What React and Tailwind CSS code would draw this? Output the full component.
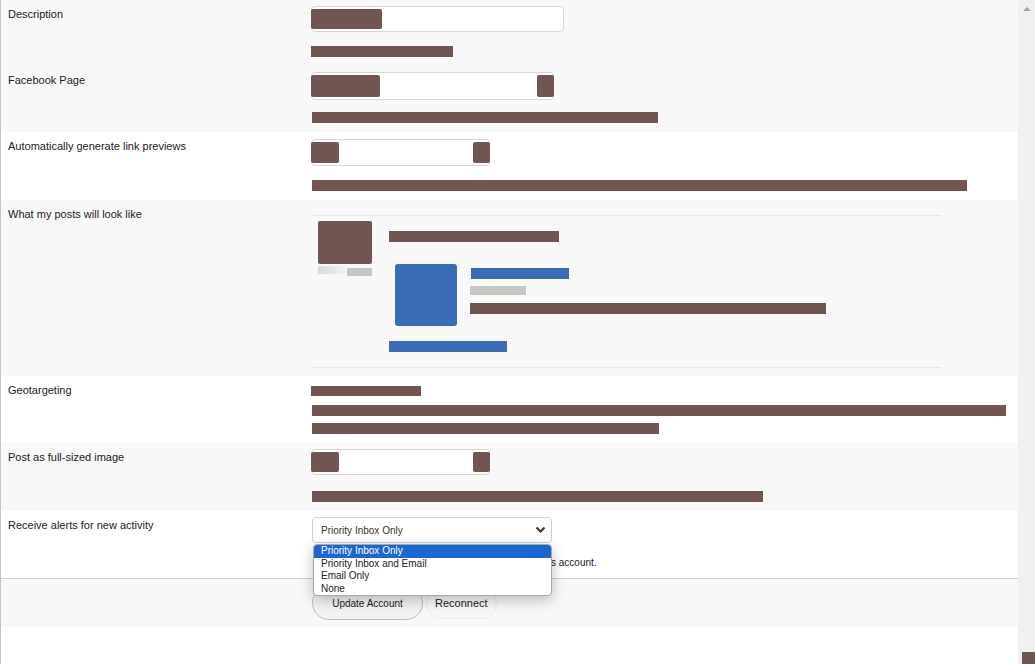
import React from "react";

const B = "bg-[#715553]";

function Label({ children }) {
  return (
    <div className="w-[310px] shrink-0 pl-[7px] pt-[7px] text-[11px] leading-[14px] text-[#222]">
      {children}
    </div>
  );
}

function Input({ w, h, left, right }) {
  return (
    <div
      className={`relative rounded-[4px] border border-[#d6d6d6] bg-white ${w} ${h}`}
    >
      <div className={`absolute left-[-1px] top-[2px] bottom-[2px] rounded-[2px] ${B} ${left}`} />
      {right && (
        <div className={`absolute right-[-1px] top-[2px] bottom-[2px] rounded-[2px] ${B} ${right}`} />
      )}
    </div>
  );
}

export default function App() {
  return (
    <div
      className="flex h-[664px] w-[1035px] overflow-hidden bg-white"
      style={{ fontFamily: '"Liberation Sans", Arial, sans-serif' }}
    >
      <div className="flex flex-1 flex-col border-l border-[#c4c4c4]">
        {/* Description */}
        <div className="flex h-[66px] bg-[#f8f8f8]">
          <Label>Description</Label>
          <div className="flex flex-col pt-[6px]">
            <Input w="w-[253px]" h="h-[26px]" left="w-[71px]" />
            <div className={`mt-[14px] h-[11px] w-[142px] ${B}`} />
          </div>
        </div>
        {/* Facebook Page */}
        <div className="flex h-[66px] bg-[#f8f8f8]">
          <Label>Facebook Page</Label>
          <div className="flex flex-col pt-[6px]">
            <Input w="w-[243px]" h="h-[28px]" left="w-[69px]" right="w-[17px]" />
            <div className={`ml-px mt-[12px] h-[11px] w-[346px] ${B}`} />
          </div>
        </div>
        {/* Auto link previews */}
        <div className="flex h-[68px] bg-white">
          <Label>Automatically generate link previews</Label>
          <div className="flex flex-col pt-[7px]">
            <Input w="w-[179px]" h="h-[27px]" left="w-[28px]" right="w-[17px]" />
            <div className={`ml-px mt-[14px] h-[11px] w-[655px] ${B}`} />
          </div>
        </div>
        {/* Preview */}
        <div className="flex h-[176px] bg-[#f8f8f8]">
          <Label>What my posts will look like</Label>
          <div className="pt-[15px]">
            <div className="flex w-[630px] border-y border-[#e8e8e8] pb-[15px]">
              <div className="w-[78px] shrink-0 pl-[7px] pt-[5px]">
                <div className={`h-[43px] w-[54px] rounded-[2px] ${B}`} />
                <div className="mt-[2px] flex h-[8px] w-[54px]">
                  <div className="h-full w-[29px] bg-gradient-to-r from-[#d8d8d8] to-[#f4f4f4]" />
                  <div className="mt-[2px] h-[8px] w-[25px] bg-[#c6c6c2]" />
                </div>
              </div>
              <div className="flex flex-col pt-[15px]">
                <div className={`h-[11px] w-[170px] ${B}`} />
                <div className="ml-[6px] mt-[22px] flex">
                  <div className="h-[62px] w-[62px] rounded-[3px] bg-[#3a6bb7]" />
                  <div className="ml-[13px] flex flex-col pt-[4px]">
                    <div className="ml-px h-[11px] w-[98px] bg-[#3a6bb7]" />
                    <div className="mt-[7px] h-[9px] w-[56px] bg-[#c6c6c2]" />
                    <div className={`mt-[8px] h-[11px] w-[356px] ${B}`} />
                  </div>
                </div>
                <div className="mt-[15px] h-[11px] w-[118px] bg-[#3a6bb7]" />
              </div>
            </div>
          </div>
        </div>
        {/* Geotargeting */}
        <div className="flex h-[67px] bg-white">
          <Label>Geotargeting</Label>
          <div className="flex flex-col pt-[10px]">
            <div className={`h-[10px] w-[110px] ${B}`} />
            <div className={`ml-px mt-[9px] h-[11px] w-[694px] ${B}`} />
            <div className={`ml-px mt-[7px] h-[11px] w-[347px] ${B}`} />
          </div>
        </div>
        {/* Full-sized image */}
        <div className="flex h-[68px] bg-[#f8f8f8]">
          <Label>Post as full-sized image</Label>
          <div className="flex flex-col pt-[6px]">
            <Input w="w-[179px]" h="h-[26px]" left="w-[28px]" right="w-[17px]" />
            <div className={`ml-px mt-[16px] h-[11px] w-[451px] ${B}`} />
          </div>
        </div>
        {/* Alerts */}
        <div className="relative z-10 flex h-[67px] bg-white">
          <Label>Receive alerts for new activity</Label>
          <div className="relative flex flex-col pt-[6px]">
            <div className="ml-px flex h-[26px] w-[240px] items-center justify-between rounded-[4px] border border-[#cfcfcf] bg-white pl-[8px] pr-[5px] text-[10px] text-[#333]">
              <span>Priority Inbox Only</span>
              <svg width="11" height="8" viewBox="0 0 11 8">
                <polyline points="1.5,1.5 5.5,5.5 9.5,1.5" fill="none" stroke="#333" strokeWidth="2" />
              </svg>
            </div>
            <div className="ml-[240px] mt-[14px] whitespace-nowrap text-[10px] leading-[12px] text-[#222]">
              s account.
            </div>
            <div className="absolute left-[2px] top-[33px] w-[239px] overflow-hidden rounded-[4px] border border-[#a8a8a8] bg-white text-[10px] leading-[12.5px] text-[#222] shadow-[0_4px_14px_rgba(0,0,0,0.25)]">
              <div className="bg-[#1a66d2] pl-[7px] text-white">Priority Inbox Only</div>
              <div className="pl-[7px]">Priority Inbox and Email</div>
              <div className="pl-[7px]">Email Only</div>
              <div className="pl-[7px]">None</div>
            </div>
          </div>
        </div>
        {/* Footer */}
        <div className="flex h-[49px] items-center border-t border-[#c9d1da] bg-[#f8f8f8] pl-[311px]">
          <div className="flex h-[34px] w-[111px] items-center justify-center rounded-[17px] border border-[#bdbdbd] bg-[#f3f3f3] text-[10px] text-[#222]">
            Update Account
          </div>
          <div className="ml-[3px] flex h-[32px] items-center rounded-[16px] border border-[#ececec] px-[8px] text-[11px] text-[#222]">
            Reconnect
          </div>
        </div>
        <div className="flex-1 bg-white" />
      </div>
      {/* Scrollbar */}
      <div className="relative flex w-[17px] shrink-0 flex-col justify-between bg-[#f0f0f0]">
        <div className="flex justify-center pt-[7px]">
          <svg width="8" height="4" viewBox="0 0 8 4">
            <polygon points="4,0 8,4 0,4" fill="#a3a3a3" />
          </svg>
        </div>
        <div className={`ml-[4px] h-[12px] w-[13px] ${B}`} />
      </div>
    </div>
  );
}
